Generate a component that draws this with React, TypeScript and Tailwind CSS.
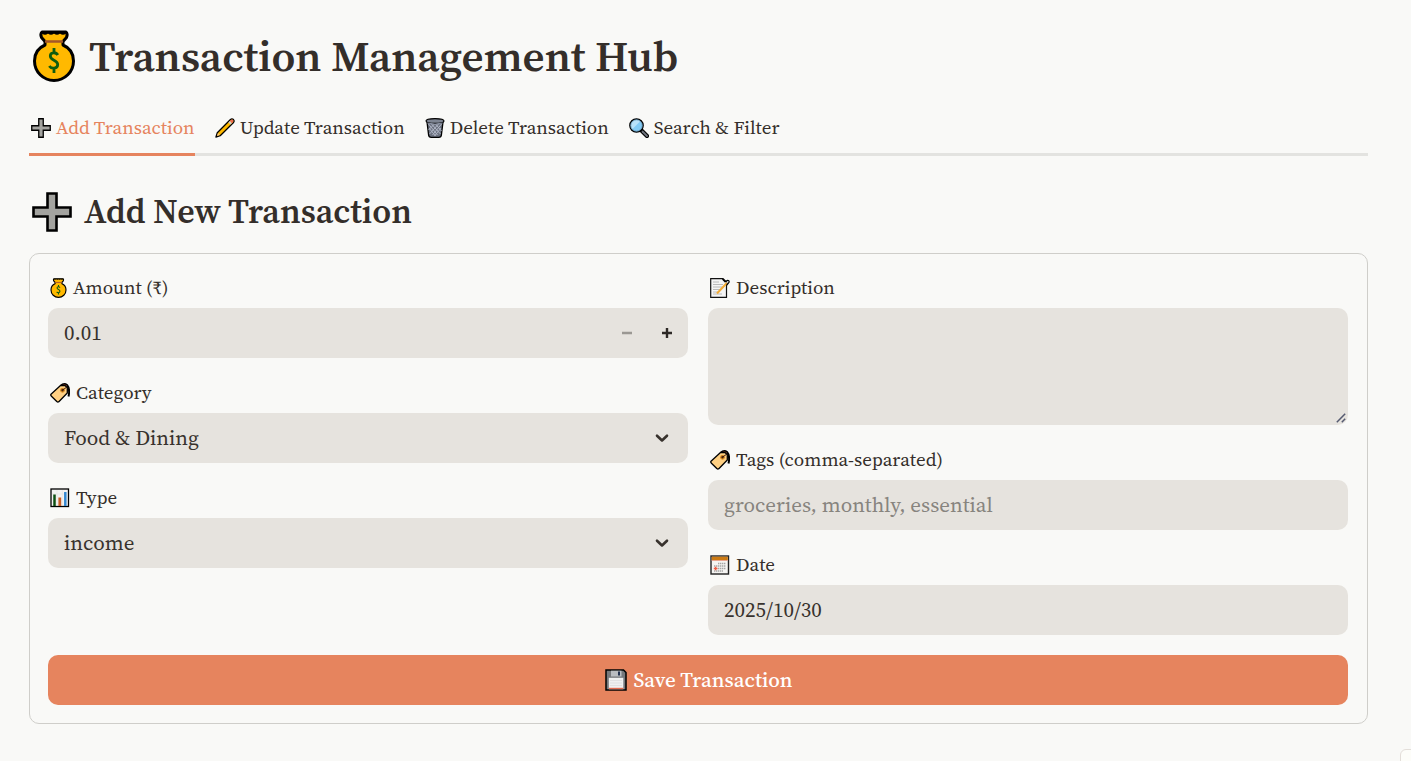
import React, { useState } from "react";
import type { ReactNode } from "react";

type IconProps = { className?: string };

const MoneyBag = ({ className }: IconProps) => (
  <svg viewBox="0 0 42 52" className={className} aria-hidden="true">
    <path d="M9 2 Q7 4 8.500 7.500 L12 11.500 V15 C5 18 1.500 24 1.500 31 A19.500 19.500 0 0 0 40.500 31 C40.500 24 37 18 30 15 V11.500 L33.500 7.500 Q35 4 33 2 Z" fill="#ffb900" stroke="#000" strokeWidth="3" strokeLinejoin="round" />
    <path d="M9 2 H33 V3.500 Q30 6 27 3.500 Q24 6 21 3.500 Q18 6 15 3.500 Q12 6 9 3.500 Z" fill="#000" />
    <path d="M12 11.500 H30" stroke="#a4562a" strokeWidth="2.500" />
    <path d="M24.800 25 C23 21.800 17.300 22 17.300 26 C17.300 30.500 24.700 29.800 24.700 34.500 C24.700 38.800 18.500 39.300 16.300 36 M21 18 V23 M21 38 V43" fill="none" stroke="#0f5c0f" strokeWidth="2.800" />
  </svg>
);

const Plus = ({ className }: IconProps) => (
  <svg viewBox="0 0 40 40" className={className} aria-hidden="true">
    <path d="M15.500 1.500 H24.500 V15.500 H38.500 V24.500 H24.500 V38.500 H15.500 V24.500 H1.500 V15.500 H15.500 Z" fill="#a3a39f" stroke="#000" strokeWidth="2.600" />
  </svg>
);

const Pencil = ({ className }: IconProps) => (
  <svg viewBox="0 0 20 20" className={className} aria-hidden="true">
    <path d="M.900 19.100 L2.300 14.800 L15.200 1.700 Q17 .200 18.500 1.600 Q19.800 3.100 18.300 4.800 L5.200 17.700 Z" fill="#ffb900" stroke="#000" strokeWidth="1.300" strokeLinejoin="round" />
    <path d="M15.700 2.200 Q17.100 1.100 18 2 Q18.900 3 17.800 4.300 L16.900 5.200 L14.800 3.100 Z" fill="#ef6950" />
    <path d="M14.800 3.100 L16.900 5.200 L15.500 6.600 L13.400 4.500 Z" fill="#d2d0ce" />
    <path d="M3 15.100 L4.900 17 L2 18 Z" fill="#f7c88b" />
  </svg>
);

const Bin = ({ className }: IconProps) => (
  <svg viewBox="0 0 20 20" className={className} aria-hidden="true">
    <path d="M2 4 L3.600 17 Q3.800 19.300 6.300 19.300 H13.700 Q16.200 19.300 16.400 17 L18 4 Z" fill="#6c7280" stroke="#000" strokeWidth="1.300" />
    <path d="M3.500 6 L12.500 17 M6.500 6 L15.500 16 M10.500 6 L16.500 13 M4 10 L10.500 18 M16.500 6 L7.500 17 M13.500 6 L4.500 16 M9.500 6 L3.500 12 M16 10 L9.500 18" stroke="#aeb4c4" strokeWidth="1" />
    <ellipse cx="10" cy="3" rx="9" ry="2.400" fill="#7d8492" stroke="#000" strokeWidth="1.200" />
    <path d="M2.500 5 Q10 7.300 17.500 5" fill="none" stroke="#8e96a8" strokeWidth="1" />
  </svg>
);

const Magnifier = ({ className }: IconProps) => (
  <svg viewBox="0 0 20 20" className={className} aria-hidden="true">
    <path d="M12 12 L18 18" stroke="#000" strokeWidth="4.200" strokeLinecap="round" />
    <path d="M13.500 13.500 L18 18" stroke="#6f747e" strokeWidth="1.800" strokeLinecap="round" />
    <circle cx="7.500" cy="7.500" r="6.700" fill="#83cbf5" stroke="#000" strokeWidth="1.300" />
    <path d="M3.300 11.200 L11.200 3.300 A5.600 5.600 0 0 0 3.300 11.200" fill="#b8e2fa" />
    <circle cx="7.500" cy="7.500" r="5.700" fill="none" stroke="#5d7f99" strokeWidth=".600" />
  </svg>
);

const Tag = ({ className }: IconProps) => (
  <svg viewBox="0 0 20 20" className={className} aria-hidden="true">
    <path d="M10.500 3 Q14 -.300 17 2 Q20.300 6 18.500 13.500" fill="none" stroke="#000" strokeWidth="2" />
    <path d="M12.500 2.300 Q15 1 16.800 3" fill="none" stroke="#9b3f25" strokeWidth="1" />
    <path d="M1 11.200 L10.500 2.500 H15 L17.300 4.800 V10 L8.800 18.700 Q7.800 19.400 6.800 18.500 L1.200 13 Q.500 12 1 11.200 Z" fill="#ffd083" stroke="#000" strokeWidth="1.300" strokeLinejoin="round" />
    <circle cx="12.500" cy="7.300" r="1.800" fill="#4b2110" stroke="#d98a1c" strokeWidth="1.200" />
    <path d="M12.500 7.300 Q15 5 16.800 4.300" fill="none" stroke="#3a1a0c" strokeWidth="1" />
  </svg>
);

const Chart = ({ className }: IconProps) => (
  <svg viewBox="0 0 20 20" className={className} aria-hidden="true">
    <rect x="1" y="1" width="17.500" height="17.500" fill="#f3f2f1" stroke="#000" strokeWidth="1.300" />
    <path d="M7 2 V18 M12.300 2 V18 M2 6 H18" stroke="#deddd9" strokeWidth=".500" />
    <path d="M4.500 6.500 V18" stroke="#0e4f12" strokeWidth="2.500" />
    <path d="M9.800 9.500 V18" stroke="#c75b24" strokeWidth="2.800" />
    <path d="M15.300 4 V18" stroke="#3487cf" strokeWidth="2.500" />
  </svg>
);

const Memo = ({ className }: IconProps) => (
  <svg viewBox="0 0 20 20" className={className} aria-hidden="true">
    <path d="M.700 .700 H13 L16.500 4 V19.300 H.700 Z" fill="#f5f5f5" stroke="#111" strokeWidth="1.200" />
    <path d="M3 4 H9 M3 6.500 H13 M3 9 H12 M3 11.500 H10 M3 14 H8 M3 16 H12" stroke="#b4b4b4" strokeWidth=".900" />
    <path d="M7 15.500 L17 4.800" stroke="#f2ab37" strokeWidth="2" />
    <path d="M12.500 1 L15 3.800 L17.500 2.500 Q19.500 2.500 19 4.200 L16.800 7" fill="none" stroke="#000" strokeWidth="1.300" />
    <path d="M16.800 4.900 L18.200 3.500" stroke="#c9c9c9" strokeWidth="1.200" />
  </svg>
);

const CalendarPage = ({ className }: IconProps) => (
  <svg viewBox="0 0 20 20" className={className} aria-hidden="true">
    <rect x="1" y="1" width="17.500" height="18" fill="#f5f4f2" stroke="#222" strokeWidth="1.400" />
    <path d="M1.700 1.700 H17.800 V5 H1.700 Z" fill="#cc7a12" />
    <path d="M1.700 5.500 H17.800" stroke="#e8a58f" strokeWidth="1" />
    <path d="M8 8.500 H16 M4 11 H16 M8 13.500 H16 M4 16 H13" stroke="#a5a5a5" strokeWidth="1.400" strokeDasharray="1.400 .600" />
    <path d="M3.800 13.500 H7.500 M5.600 11.800 V15.200" stroke="#ee5b43" strokeWidth="1.400" />
  </svg>
);

const Floppy = ({ className }: IconProps) => (
  <svg viewBox="0 0 22 22" className={className} aria-hidden="true">
    <path d="M1 1 H18.500 L21 3.500 V21 H1 Z" fill="#76787c" stroke="#000" strokeWidth="1.500" />
    <path d="M6 1.700 H16.500 V7.500 H6 Z" fill="#b9bcc0" />
    <path d="M13 2.500 H15 V6.500 H13 Z" fill="#24324f" />
    <path d="M3.800 8.800 H18.300 V20.200 H3.800 Z" fill="#f0f0f0" />
    <path d="M5 11.500 H17 M5 14 H17 M5 16.500 H17" stroke="#dadada" strokeWidth=".700" />
    <path d="M3.800 19.500 H18.300" stroke="#e46b50" strokeWidth="1.400" />
  </svg>
);

const Chevron = () => (
  <svg viewBox="0 0 14 10" className="pointer-events-none absolute top-5 right-[19px] h-[10px] w-[14px]" aria-hidden="true">
    <path d="M2 2.700 L7 7.500 L12 2.700" fill="none" stroke="#38322d" strokeWidth="2.600" strokeLinecap="round" strokeLinejoin="round" />
  </svg>
);

const fieldClass =
  "block h-[50px] w-full appearance-none rounded-[10px] bg-[#e6e3de] px-4 text-[21px] text-[#38322d] outline-none placeholder:text-[#87847e]";
const inputClass = `${fieldClass} pb-0.5`;

function Field({ id, icon, label, children }: { id: string; icon: ReactNode; label: string; children: ReactNode }) {
  return (
    <div>
      <label htmlFor={id} className="mb-[5px] flex h-[30px] items-center gap-1.5 pl-0.5 text-[19px] whitespace-nowrap">
        {icon}
        <span className="pb-0.5">{label}</span>
      </label>
      <div className="relative">{children}</div>
    </div>
  );
}

const tabs = [
  { name: "Add Transaction", icon: <Plus className="size-5" /> },
  { name: "Update Transaction", icon: <Pencil className="size-5" /> },
  { name: "Delete Transaction", icon: <Bin className="size-5" /> },
  { name: "Search & Filter", icon: <Magnifier className="size-5" /> },
];

export default function App() {
  const [active, setActive] = useState(0);
  const [amount, setAmount] = useState(0.01);
  return (
    <div className="relative min-h-screen overflow-hidden bg-[#f9f9f7] pr-[43px] pl-[29px] font-['Source_Serif_4','Source_Serif_Pro','Liberation_Serif',serif] text-[#342e2a]">
      <h1 className="flex h-[112px] items-center gap-3.5 pl-1 text-[43px] font-semibold whitespace-nowrap">
        <MoneyBag className="h-[52px] w-[42px]" />
        Transaction Management Hub
      </h1>
      <div role="tablist" className="flex h-11 gap-[18px] border-b-3 border-[#e3e3e0]">
        {tabs.map((tab, i) => (
          <button
            key={tab.name}
            type="button"
            role="tab"
            aria-selected={i === active}
            onClick={() => setActive(i)}
            className={`-mb-[3px] flex h-11 items-center gap-[5px] border-b-3 pb-[9px] pl-0.5 text-[19px] whitespace-nowrap ${
              i === active ? "border-[#e6845e] text-[#e6845e]" : "border-transparent"
            }`}
          >
            {tab.icon}
            <span className="pb-0.5">{tab.name}</span>
          </button>
        ))}
      </div>
      <h2 className="flex h-[97px] items-center gap-3 pt-3.5 pl-[3px] text-[34px] font-semibold whitespace-nowrap">
        <Plus className="size-10" />
        Add New Transaction
      </h2>
      <form
        onSubmit={(e) => e.preventDefault()}
        className="rounded-[10px] border border-[#cfceca] pt-[19px] pr-[19px] pb-[18px] pl-[18px]"
      >
        <div className="grid grid-cols-2 gap-5">
          <div className="flex flex-col gap-5">
            <Field id="amount" icon={<MoneyBag className="h-5 w-[17px]" />} label="Amount (₹)">
              <input id="amount" inputMode="decimal" className={inputClass} value={amount.toFixed(2)} onChange={(e) => setAmount(Number(e.target.value) || 0.01)} />
              <div className="absolute top-0 right-px flex h-full">
                <button type="button" aria-label="Decrease amount" disabled={amount <= 0.01} onClick={() => setAmount(amount - 0.01)} className="flex w-10 items-center justify-center disabled:opacity-40">
                  <svg viewBox="0 0 10 10" className="size-2.5"><path d="M0 5 H10" stroke="#2d2926" strokeWidth="2.500" /></svg>
                </button>
                <button type="button" aria-label="Increase amount" onClick={() => setAmount(amount + 0.01)} className="flex w-10 items-center justify-center">
                  <svg viewBox="0 0 10 10" className="size-2.5"><path d="M0 5 H10 M5 0 V10" stroke="#2d2926" strokeWidth="2.400" /></svg>
                </button>
              </div>
            </Field>
            <Field id="category" icon={<Tag className="size-5" />} label="Category">
              <select id="category" className={fieldClass}>
                <option>Food &amp; Dining</option>
              </select>
              <Chevron />
            </Field>
            <Field id="type" icon={<Chart className="size-5" />} label="Type">
              <select id="type" className={fieldClass}>
                <option>income</option>
                <option>expense</option>
              </select>
              <Chevron />
            </Field>
          </div>
          <div className="flex flex-col gap-5">
            <Field id="description" icon={<Memo className="size-5" />} label="Description">
              <textarea id="description" className="block h-[117px] w-full resize-y rounded-[10px] bg-[#e6e3de] px-4 py-3 text-[21px] outline-none [&::-webkit-resizer]:hidden" />
              <svg viewBox="0 0 10 10" className="pointer-events-none absolute right-0.5 bottom-0.5 size-2.5" aria-hidden="true">
                <path d="M.800 9.200 L9.200 .800 M5.800 9.200 L9.200 5.800" stroke="#555a70" strokeWidth="1.500" />
              </svg>
            </Field>
            <Field id="tags" icon={<Tag className="size-5" />} label="Tags (comma-separated)">
              <input id="tags" placeholder="groceries, monthly, essential" className={inputClass} />
            </Field>
            <Field id="date" icon={<CalendarPage className="size-5" />} label="Date">
              <input id="date" defaultValue="2025/10/30" className={inputClass} />
            </Field>
          </div>
        </div>
        <button type="submit" className="mt-5 flex h-[50px] w-full items-center justify-center gap-1.5 rounded-[10px] bg-[#e6845e] pl-0.5 text-[21px] font-medium text-white">
          <Floppy className="size-[22px]" />
          Save Transaction
        </button>
      </form>
      <div className="absolute -right-[9px] -bottom-2 size-5 rounded-md border border-[#e3ded9] bg-[#fdfdf9]" />
    </div>
  );
}
